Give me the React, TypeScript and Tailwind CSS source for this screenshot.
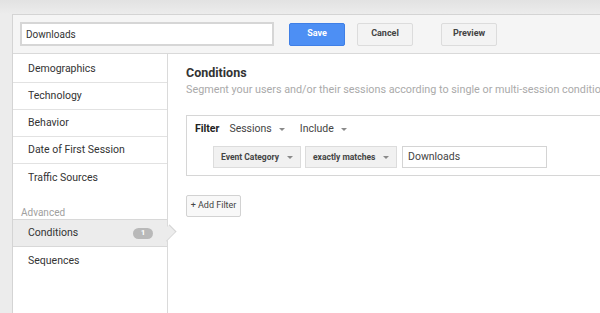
const Caret = () => (
  <svg width="6" height="3" viewBox="0 0 6 3" className="inline-block">
    <path d="M0 0 L6 0 L3 3 Z" fill="#8a8a8a" />
  </svg>
);

const sideItems = ['Demographics', 'Technology', 'Behavior', 'Date of First Session'];

const App = () => {
  return (
    <div
      className="w-[600px] h-[313px] bg-[#ececec] overflow-hidden flex flex-col text-[#333]"
      style={{ fontFamily: 'Roboto, "Liberation Sans", sans-serif' }}
    >
      {/* top strip */}
      <div className="h-[14px] shrink-0 bg-gradient-to-b from-[#e2e2e2] to-[#ececec]" />

      <div className="flex flex-1 min-h-0">
        <div className="w-[12px] shrink-0" />

        <div className="flex-1 flex flex-col bg-white border-l border-t border-[#d4d4d4]">
          {/* header */}
          <div className="h-[39px] shrink-0 bg-[#f5f5f5] border-b border-[#d9d9d9] flex items-center pl-[7px]">
            <div className="w-[254px] h-[24px] bg-white border-2 border-[#d6d6d6] flex items-center px-[4px] text-[10px] text-[#333]">
              Downloads
            </div>
            <button className="ml-[15px] w-[56px] h-[23px] rounded-[2px] bg-[#4d8ff4] border border-[#3f7fe6] text-white text-[9px] font-bold">
              Save
            </button>
            <button className="ml-[12px] w-[56px] h-[23px] rounded-[2px] bg-[#f3f3f3] border border-[#dcdcdc] text-[#444] text-[9px] font-bold">
              Cancel
            </button>
            <button className="ml-[28px] w-[56px] h-[23px] rounded-[2px] bg-[#f3f3f3] border border-[#dcdcdc] text-[#444] text-[9px] font-bold">
              Preview
            </button>
          </div>

          <div className="flex flex-1 min-h-0">
            {/* sidebar */}
            <div className="w-[155px] shrink-0 border-r border-[#dadada] relative pt-[2px] text-[10.5px] text-[#333]">
              {sideItems.map((s) => (
                <div key={s} className="h-[27px] border-b border-[#e2e2e2] flex items-center pl-[15px]">
                  {s}
                </div>
              ))}
              <div className="h-[27px] flex items-center pl-[15px]">Traffic Sources</div>
              <div className="pt-[15px] pl-[8px] h-[28px] text-[10px] text-[#a0a0a0] leading-[14px]">Advanced</div>
              <div className="h-[28px] bg-[#ececec] border-y border-[#d8d8d8] flex items-center pl-[15px] pr-[14px] relative">
                <span className="flex-1">Conditions</span>
                <span className="w-[20px] h-[11px] rounded-full bg-[#b9b9b9] text-white text-[8px] font-bold flex items-center justify-center">
                  1
                </span>
                <div className="absolute right-[-8px] top-[6px] w-[14px] h-[14px] rotate-45 bg-[#ececec] border-t border-r border-[#d4d4d4] scale-x-[0.7] origin-center" />
              </div>
              <div className="h-[27px] flex items-center pl-[15px]">Sequences</div>
            </div>

            {/* content */}
            <div className="flex-1 min-w-0 overflow-hidden pl-[18px] pt-[11px]">
              <div className="text-[12.5px] font-bold text-[#333] leading-[15px]">Conditions</div>
              <div className="text-[10.8px] text-[#aaa] whitespace-nowrap leading-[15px] mt-[2px]">
                Segment your users and/or their sessions according to single or multi-session conditions
              </div>

              <div className="mt-[18px] w-[440px] h-[61px] border border-[#d6d6d6] pt-[6px]">
                <div className="flex items-center h-[14px] pl-[8px] text-[10.5px]">
                  <span className="font-bold text-[10.5px] text-[#222]">Filter</span>
                  <span className="ml-[10px] text-[#444]">Sessions</span>
                  <span className="ml-[7px]"><Caret /></span>
                  <span className="ml-[15px] text-[#444]">Include</span>
                  <span className="ml-[7px]"><Caret /></span>
                </div>
                <div className="flex items-center mt-[10px] pl-[26px] gap-[4px]">
                  <div className="w-[88px] h-[22px] bg-[#f1f1f1] border border-[#dcdcdc] flex items-center pl-[7px] pr-[7px] text-[8.5px] font-bold text-[#444]">
                    <span className="flex-1">Event Category</span>
                    <Caret />
                  </div>
                  <div className="w-[92px] h-[22px] bg-[#f1f1f1] border border-[#dcdcdc] flex items-center pl-[7px] pr-[7px] text-[8.5px] font-bold text-[#444]">
                    <span className="flex-1">exactly matches</span>
                    <Caret />
                  </div>
                  <div className="ml-[1px] w-[145px] h-[22px] bg-white border border-[#d4d4d4] flex items-center pl-[5px] text-[10.5px] text-[#444]">
                    Downloads
                  </div>
                </div>
              </div>

              <button className="mt-[19px] w-[55px] h-[22px] rounded-[2px] bg-[#f8f8f8] border border-[#d2d2d2] text-[9px] text-[#444]">
                + Add Filter
              </button>
            </div>
          </div>
        </div>
      </div>
    </div>
  );
};

export default App;
